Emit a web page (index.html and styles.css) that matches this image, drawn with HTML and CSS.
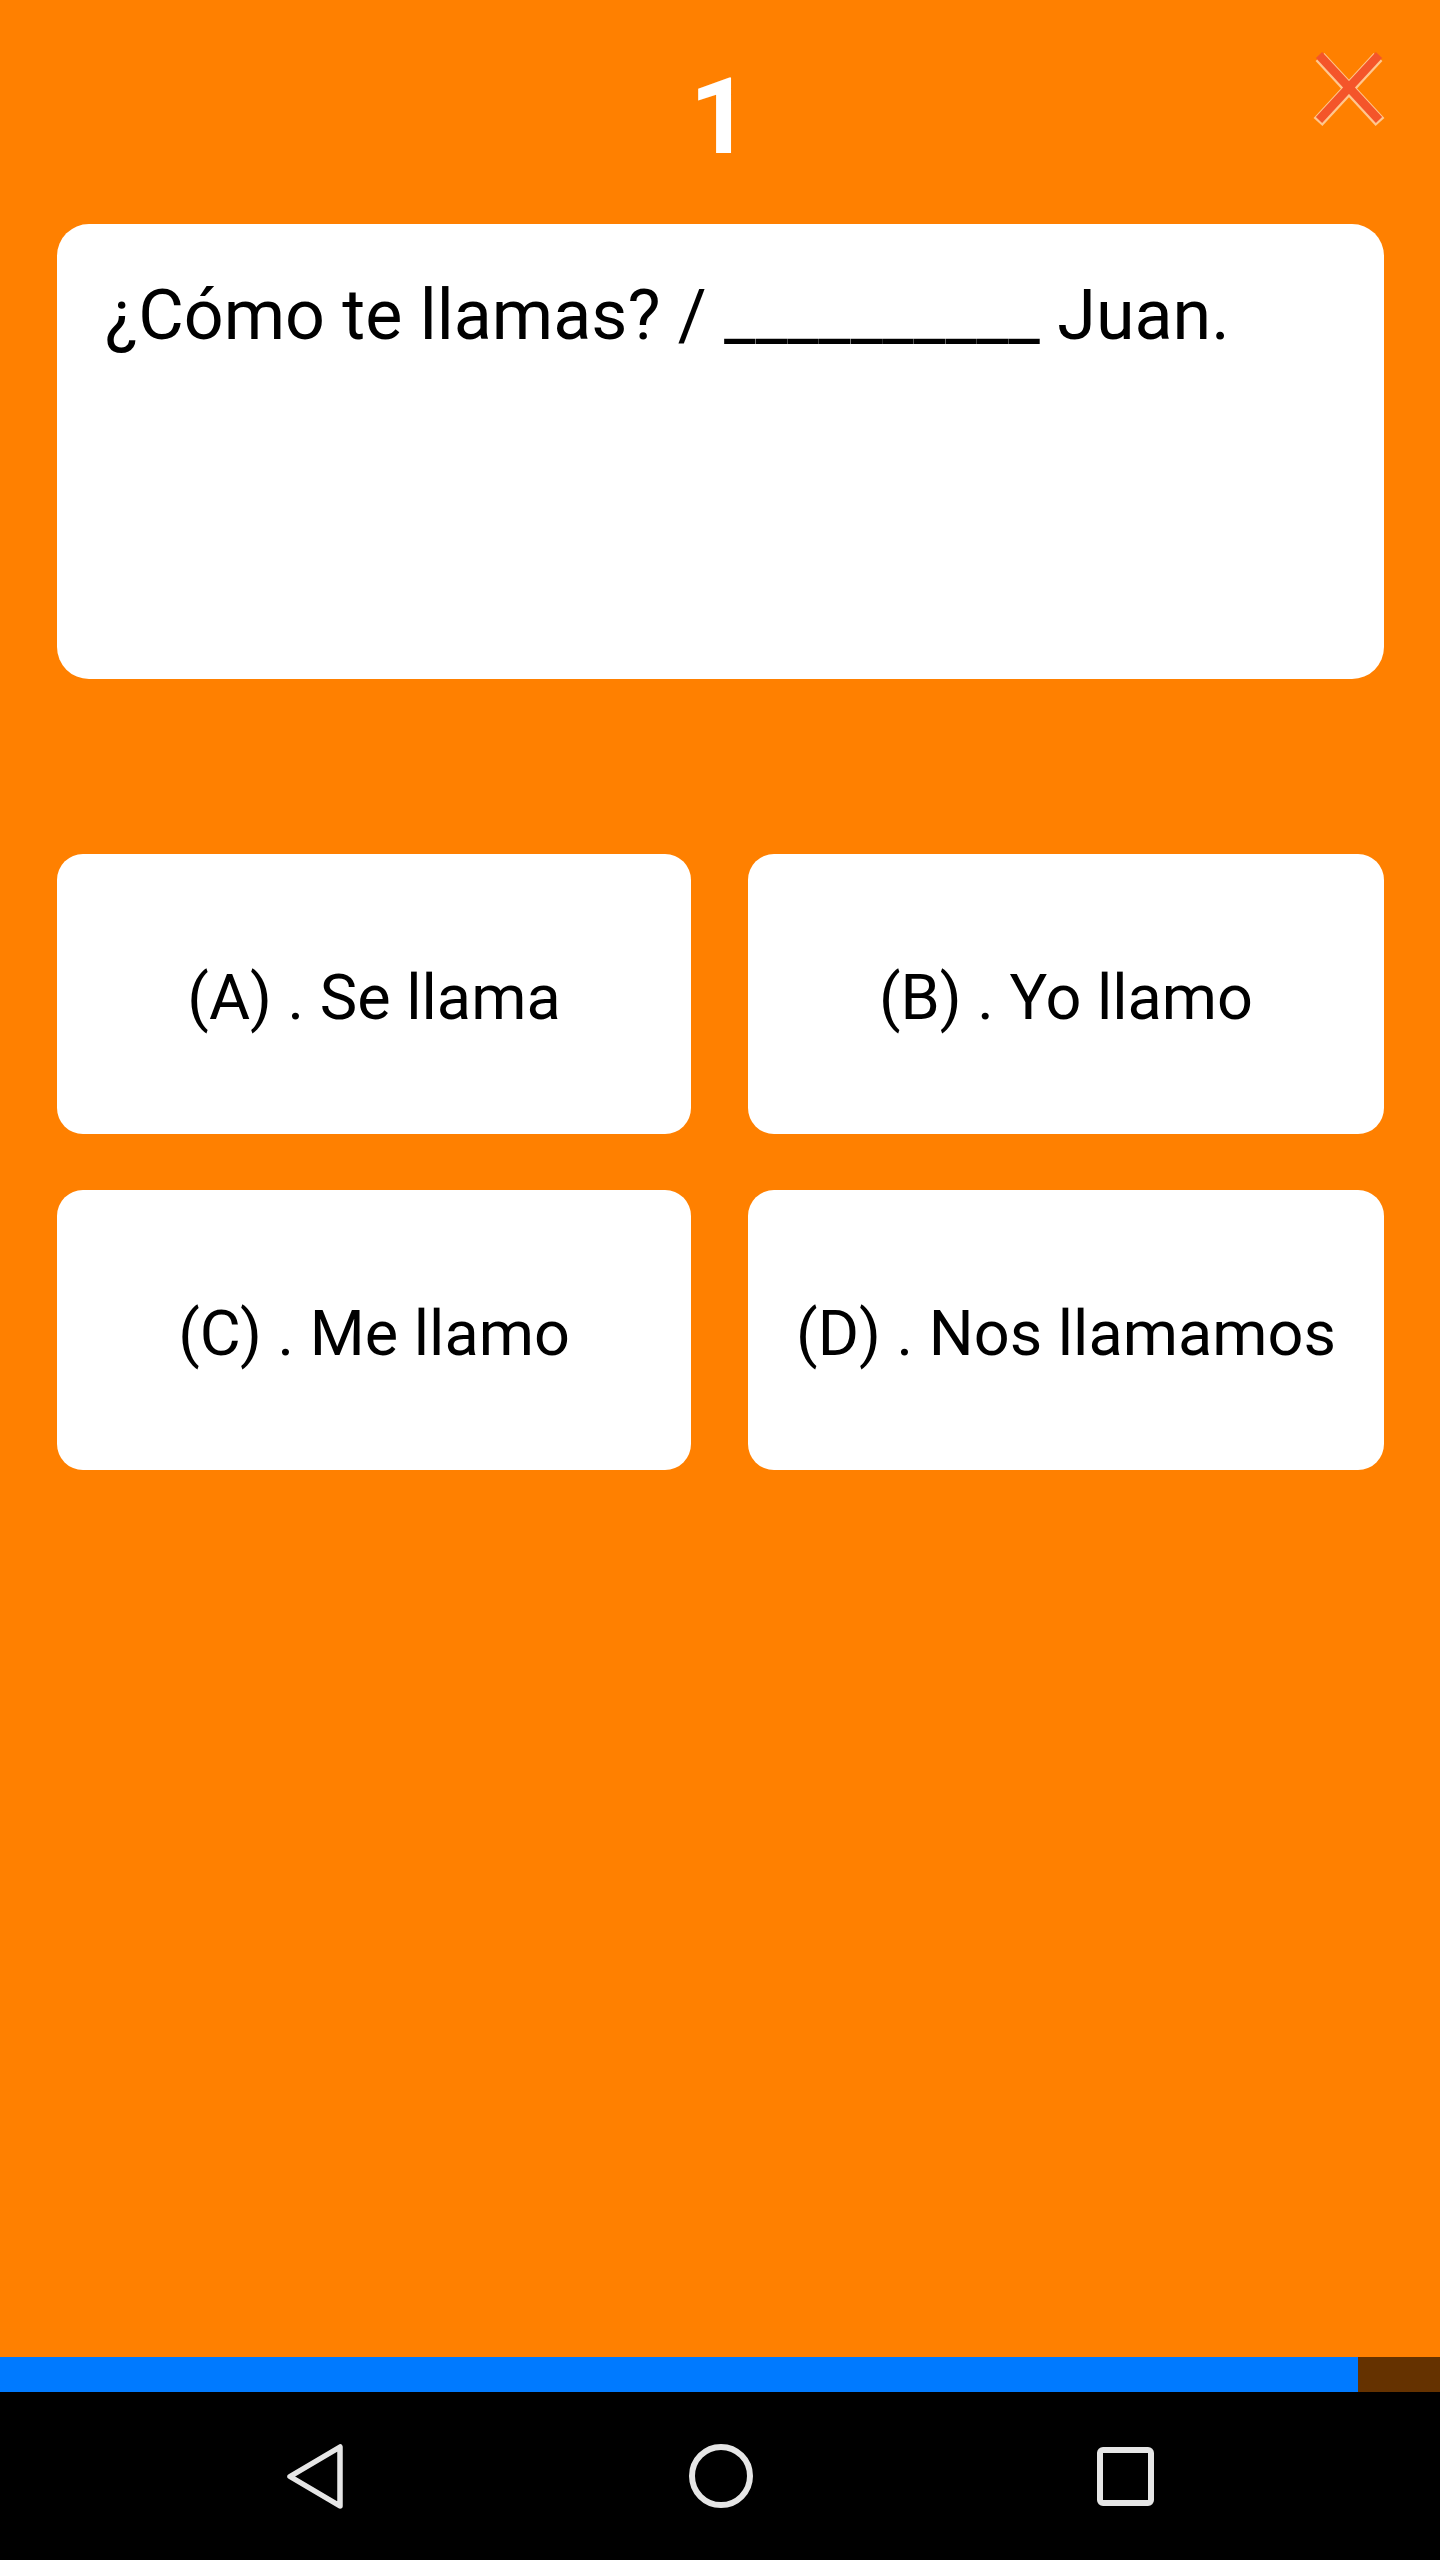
FILE: index.html
```html
<!DOCTYPE html>
<html lang="es">
<head>
<meta charset="utf-8">
<title>Quiz</title>
<link rel="stylesheet" href="styles.css">
</head>
<body>
<div class="screen">
  <header class="header">
    <div class="qnum">1</div>
    <button class="close" aria-label="Cerrar">
      <svg width="72" height="78" viewBox="0 0 72 78">
        <g stroke-linecap="butt">
          <line x1="7" y1="8" x2="67" y2="73" stroke="#ffc78e" stroke-width="12"/>
          <line x1="65" y1="8" x2="5" y2="73" stroke="#ffc78e" stroke-width="12"/>
          <line x1="6" y1="6" x2="66" y2="71" stroke="#f4552a" stroke-width="8.5"/>
          <line x1="66" y1="6" x2="6" y2="71" stroke="#f4552a" stroke-width="8.5"/>
        </g>
      </svg>
    </button>
  </header>

  <section class="question">
    <p class="question-text">¿Cómo te llamas? / __________ Juan.</p>
  </section>

  <section class="options">
    <button class="option">(A) . Se llama</button>
    <button class="option">(B) . Yo llamo</button>
    <button class="option">(C) . Me llamo</button>
    <button class="option">(D) . Nos llamamos</button>
  </section>

  <div class="spacer"></div>

  <div class="progress">
    <div class="progress-fill" style="width: 94.3%"></div>
  </div>

  <nav class="navbar">
    <svg class="nav-icon" width="80" height="80" viewBox="0 0 80 80">
      <path d="M66 11 L66 70 L16 40.5 Z" fill="none" stroke="#e6e6e6" stroke-width="5.5" stroke-linejoin="round"/>
    </svg>
    <svg class="nav-icon" width="80" height="80" viewBox="0 0 80 80">
      <circle cx="41" cy="40" r="29" fill="none" stroke="#e6e6e6" stroke-width="6"/>
    </svg>
    <svg class="nav-icon" width="80" height="80" viewBox="0 0 80 80">
      <rect x="14" y="14" width="51" height="53" rx="3" fill="none" stroke="#e6e6e6" stroke-width="6"/>
    </svg>
  </nav>
</div>
</body>
</html>
```
FILE: styles.css
```css
* {
  box-sizing: border-box;
}

html, body {
  margin: 0;
  padding: 0;
}

body {
  background: #ff8000;
  font-family: Roboto, "Liberation Sans", sans-serif;
}

.screen {
  width: 1440px;
  height: 2560px;
  display: flex;
  flex-direction: column;
  background: #ff8000;
}

.header {
  position: relative;
  height: 224px;
  padding-top: 64px;
  display: flex;
  justify-content: center;
}

.qnum {
  color: #ffffff;
  font-weight: 700;
  font-size: 106px;
  line-height: 106px;
  height: 106px;
}

.close {
  position: absolute;
  top: 49px;
  left: 1313px;
  padding: 0;
  margin: 0;
  border: 0;
  background: transparent;
  width: 72px;
  height: 78px;
}

.close svg {
  display: block;
}

.question {
  margin: 0 56px 0 57px;
  height: 455px;
  background: #ffffff;
  border-radius: 32px;
  padding: 50px 48px 0 48px;
}

.question-text {
  margin: 0;
  font-size: 70px;
  line-height: normal;
  color: #000000;
}

.options {
  margin: 175px 56px 0 57px;
  display: grid;
  grid-template-columns: 634px 636px;
  grid-auto-rows: 280px;
  column-gap: 57px;
  row-gap: 56px;
}

.option {
  margin: 0;
  border: 0;
  background: #ffffff;
  border-radius: 26px;
  font-family: Roboto, "Liberation Sans", sans-serif;
  font-size: 63px;
  color: #000000;
  display: flex;
  align-items: center;
  justify-content: center;
  padding: 6px 0 0 0;
  white-space: nowrap;
}

.spacer {
  flex: 1;
}

.progress {
  height: 35px;
  background: #653200;
  display: flex;
}

.progress-fill {
  height: 100%;
  background: #007aff;
}

.navbar {
  height: 168px;
  background: #000000;
  display: flex;
  align-items: center;
  justify-content: center;
  gap: 326px;
}

.nav-icon {
  display: block;
}
```
